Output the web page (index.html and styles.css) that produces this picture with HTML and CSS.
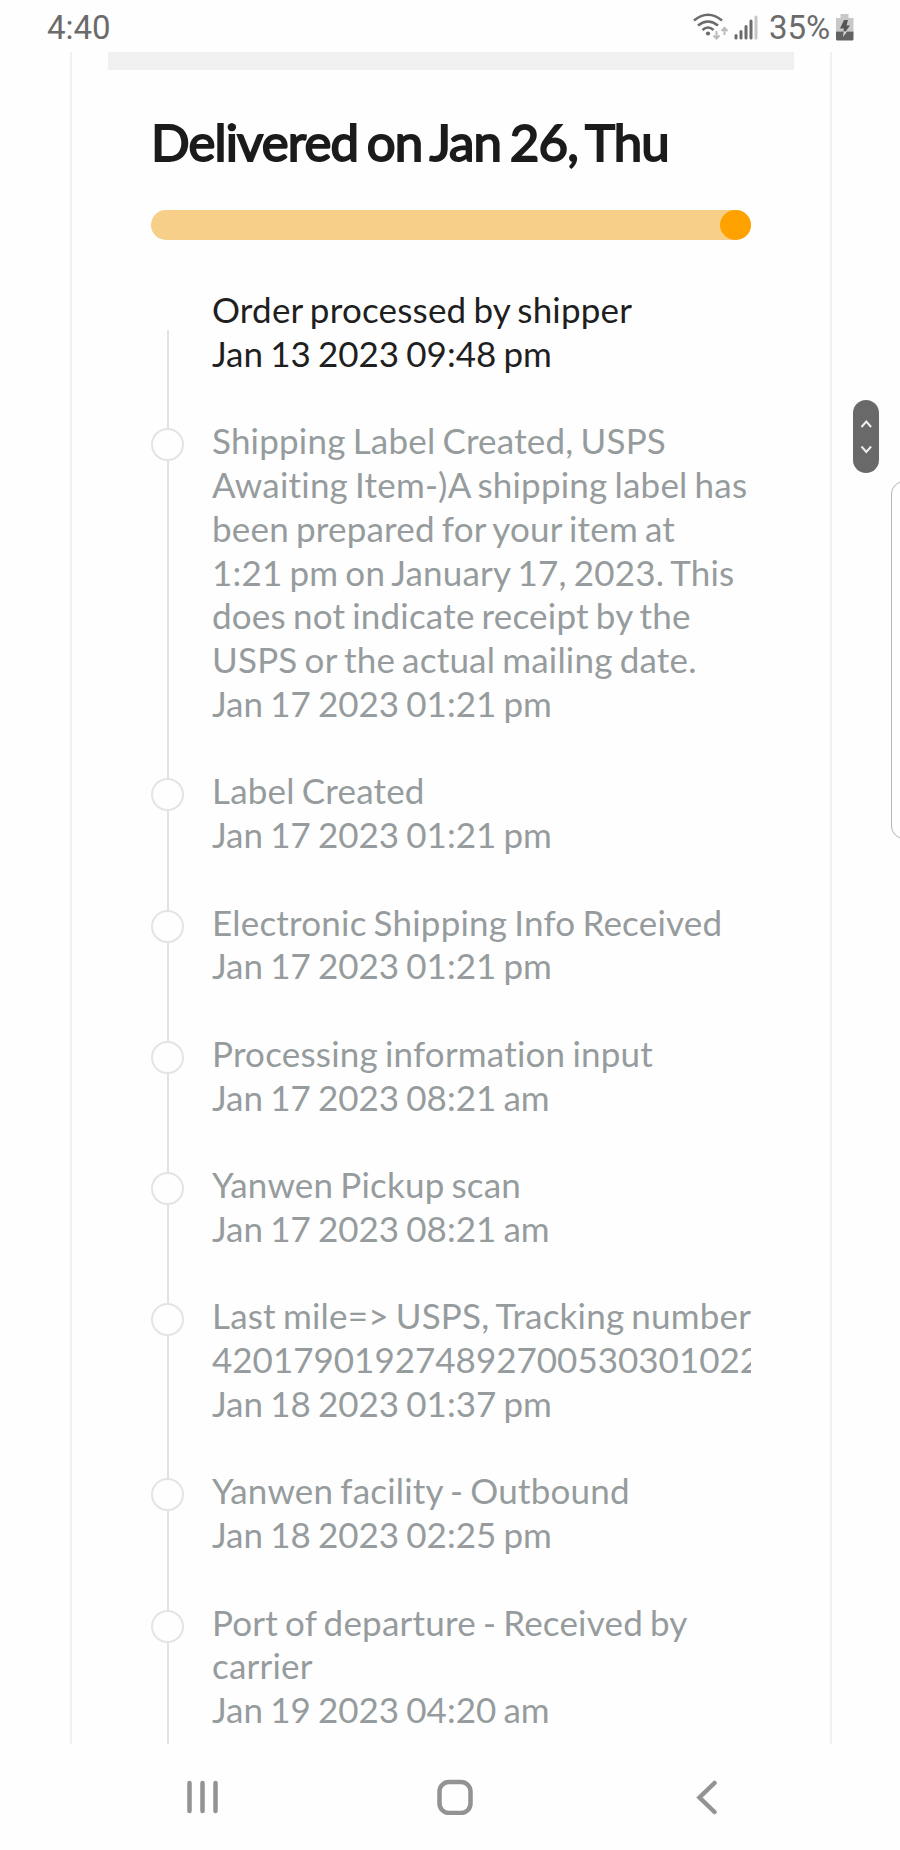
FILE: index.html
```html
<!DOCTYPE html>
<html lang="en">
<head>
    <meta charset="UTF-8">
    <meta name="viewport" content="width=device-width, initial-scale=1.0">
    <title>Order tracking</title>
    <link rel="stylesheet" href="styles.css">
</head>
<body>
    <header class="statusbar">
        <span class="time">4:40</span>
        <div class="status-icons">
            <svg class="wifi" width="36" height="28" viewBox="0 0 36 28" fill="none">
                <path d="M2 7.5Q16 -4 30 7.5M6 12.5Q16 4.500 26 12.500M10.500 17Q16 12 21.500 17" stroke="#6b6b6b" stroke-width="2.600"/>
                <circle cx="16" cy="20.500" r="2.100" fill="#6b6b6b"/>
                <path d="M24.500 18v7M21.500 22.500l3 3 3-3M32.500 22v-7M29.500 18l3-3 3 3" stroke="#bbb" stroke-width="2"/>
            </svg>
            <svg class="signal" width="24" height="28" viewBox="0 0 24 28" stroke-width="3" stroke-linecap="round" stroke="#6b6b6b">
                <path d="M2 22.500v2.500M7 18.500v6.500M12 13.500v11.500M17 8v17"/>
                <path d="M22 4v21" stroke="#c6c6c6"/>
            </svg>
            <span class="percent">35%</span>
            <svg class="battery" width="18" height="28" viewBox="0 0 18 28">
                <path d="M4.500 1h8v4H17.500v13.500H0V5h4.500z" fill="#c8c8c8"/>
                <path d="M0 18.500h17.500V26q0 1.500-1.500 1.500H1.500Q0 27.500 0 26z" fill="#626262"/>
                <path d="M8 7h4l-1.500 5.500H14L9.500 18.500H7.500L8 15.500H4z" fill="#555"/>
                <path d="M7.800 18.500h3.200l-4 5.500z" fill="#ddd"/>
            </svg>
        </div>
    </header>

    <main class="viewport">
        <div class="topbar"></div>
        <div class="tracking">
            <h1 class="title">Delivered on Jan 26, Thu</h1>
            <div class="progress"><div class="progress-dot"></div></div>
            <ul class="timeline">
                <li class="step first">Order processed by shipper<span class="date">Jan 13 2023 09:48 pm</span></li>
                <li class="step">Shipping Label Created, USPS<br>Awaiting Item-)A shipping label has<br>been prepared for your item at<br>1:21 pm on January 17, 2023. This<br>does not indicate receipt by the<br>USPS or the actual mailing date.<span class="date">Jan 17 2023 01:21 pm</span></li>
                <li class="step">Label Created<span class="date">Jan 17 2023 01:21 pm</span></li>
                <li class="step">Electronic Shipping Info Received<span class="date">Jan 17 2023 01:21 pm</span></li>
                <li class="step">Processing information input<span class="date">Jan 17 2023 08:21 am</span></li>
                <li class="step">Yanwen Pickup scan<span class="date">Jan 17 2023 08:21 am</span></li>
                <li class="step">Last mile=&gt; USPS, Tracking number<span class="number">420179019274892700530301022</span><span class="date">Jan 18 2023 01:37 pm</span></li>
                <li class="step">Yanwen facility - Outbound<span class="date">Jan 18 2023 02:25 pm</span></li>
                <li class="step">Port of departure - Received by<br>carrier<span class="date">Jan 19 2023 04:20 am</span></li>
            </ul>
        </div>
    </main>

    <nav class="navbar">
        <svg width="36" height="36" viewBox="0 0 36 36" fill="none">
            <path d="M4.500 4v28M17.500 4v28M30.500 4v28"/>
        </svg>
        <svg width="36" height="36" viewBox="0 0 36 36" fill="none">
            <rect x="2.500" y="3" width="31" height="31" rx="9.500"/>
        </svg>
        <svg width="36" height="36" viewBox="0 0 36 36" fill="none">
            <path d="M26.500 4L11.500 18.500l15 14.500"/>
        </svg>
    </nav>

    <div class="scroller">
        <svg width="26" height="73" viewBox="0 0 26 73" fill="none" stroke="#eee" stroke-width="2">
            <path d="M8.500 27l4.800-5.500 4.800 5.500M8.500 46.500l4.800 5.500 4.800-5.500"/>
        </svg>
    </div>
    <div class="edge-handle"></div>
</body>
</html>
```
FILE: styles.css
```css
*, *::before, *::after{
    box-sizing: border-box;
}
body{
    margin: 0;
    position: relative;
    width: 900px;
    height: 1850px;
    overflow: hidden;
    background: #fefefe;
    font-family: Lato, "Liberation Sans", sans-serif;
    font-variant-ligatures: none;
}

/* status bar */
.statusbar{
    height: 52px;
    padding: 0 46px 0 47px;
    display: flex;
    justify-content: space-between;
    font-family: Roboto, sans-serif;
    font-size: 33px;
    line-height: 55px;
    color: #6b6b6b;
}
.status-icons{
    display: flex;
}
.status-icons svg{
    display: block;
    margin-top: 12.5px;
}
.signal{
    margin-left: 6px;
}
.percent{
    width: 67px;
    margin-left: 11px;
    white-space: nowrap;
}

/* page content */
.viewport{
    width: 762px;
    height: 1692px;
    margin-left: 70px;
    border-left: 2px solid #f1f1f1;
    border-right: 2px solid #f1f1f1;
    overflow: hidden;
}
.topbar{
    height: 18px;
    margin: 0 36px;
    background: #f0f0f0;
}
.tracking{
    padding: 0 79px;
}
.title{
    margin: 41px 0 0;
    height: 99px;
    font-size: 51px;
    line-height: 62px;
    font-weight: 400;
    -webkit-text-stroke: 1.9px #1b1b1b;
    letter-spacing: -0.9px;
    word-spacing: -3.5px;
    white-space: nowrap;
    color: #1b1b1b;
}
.progress{
    height: 30px;
    border-radius: 15px;
    background: #f8cf89;
    display: flex;
    justify-content: flex-end;
}
.progress-dot{
    width: 31px;
    height: 30px;
    border-radius: 50%;
    background: #ffa200;
}

/* timeline */
.timeline{
    list-style: none;
    margin: 48px 0 0;
    padding: 0;
    font-size: 35px;
    line-height: 43.75px;
    letter-spacing: 0.2px;
    word-spacing: -2.1px;
    color: #969c9d;
}
.step{
    position: relative;
    padding: 0 0 43.75px 61px;
    overflow: hidden;
    white-space: nowrap;
}
.step::before{
    content: "";
    position: absolute;
    left: 16px;
    top: 0;
    bottom: 0;
    width: 2px;
    background: #e2e2e2;
}
.step::after{
    content: "";
    position: absolute;
    left: 0;
    top: 9px;
    width: 33px;
    height: 33px;
    border: 2px solid #e4e4e4;
    border-radius: 50%;
    background: #fefefe;
}
.first{
    color: #1f1f1f;
}
.first::before{
    top: 42px;
}
.first::after{
    display: none;
}
.date{
    display: block;
    letter-spacing: 0;
    word-spacing: -1.8px;
}
.number{
    display: block;
    overflow: hidden;
    letter-spacing: 0;
}

/* navigation */
.navbar{
    height: 106px;
    padding: 0 176px 0 185px;
    display: flex;
    justify-content: space-between;
    align-items: center;
    stroke: #939393;
    stroke-width: 4.5;
    stroke-linecap: round;
}

/* overlays */
.scroller{
    position: absolute;
    left: 853px;
    top: 400px;
    width: 26px;
    height: 73px;
    border-radius: 13px;
    background: #696969;
}
.edge-handle{
    position: absolute;
    left: 891px;
    top: 481px;
    width: 30px;
    height: 358px;
    border: 1px solid #b5b5b5;
    border-radius: 13px;
}
```
